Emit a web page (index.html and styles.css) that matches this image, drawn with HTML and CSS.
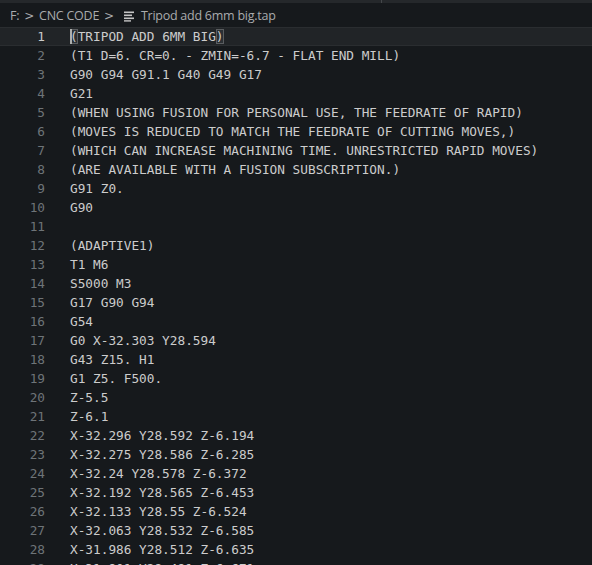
FILE: index.html
```html
<!DOCTYPE html>
<html>
<head>
<meta charset="utf-8">
<link rel="stylesheet" href="styles.css">
</head>
<body>
<div class="topstrip"><span class="tabsep"></span></div>
<div class="crumbs">
  <span>F:</span><span class="chev">&gt;</span><span>CNC CODE</span><span class="chev">&gt;</span>
  <svg class="fileicon" width="12" height="12" viewBox="0 0 12 12"><rect x="1" y="1.5" width="10" height="1.6" fill="#c5c5c5"/><rect x="1" y="4.5" width="8" height="1.6" fill="#c5c5c5"/><rect x="1" y="7.5" width="10" height="1.6" fill="#c5c5c5"/><rect x="1" y="10.2" width="7" height="1.4" fill="#c5c5c5"/></svg>
  <span>Tripod add 6mm big.tap</span>
</div>
<div class="editor">
  <div class="line current"><span class="ln">1</span><span class="code"><span class="cursor"></span><span class="bm">(</span>TRIPOD ADD 6MM BIG<span class="bm">)</span></span></div>
  <div class="line"><span class="ln">2</span><span class="code">(T1 D=6. CR=0. - ZMIN=-6.7 - FLAT END MILL)</span></div>
  <div class="line"><span class="ln">3</span><span class="code">G90 G94 G91.1 G40 G49 G17</span></div>
  <div class="line"><span class="ln">4</span><span class="code">G21</span></div>
  <div class="line"><span class="ln">5</span><span class="code">(WHEN USING FUSION FOR PERSONAL USE, THE FEEDRATE OF RAPID)</span></div>
  <div class="line"><span class="ln">6</span><span class="code">(MOVES IS REDUCED TO MATCH THE FEEDRATE OF CUTTING MOVES,)</span></div>
  <div class="line"><span class="ln">7</span><span class="code">(WHICH CAN INCREASE MACHINING TIME. UNRESTRICTED RAPID MOVES)</span></div>
  <div class="line"><span class="ln">8</span><span class="code">(ARE AVAILABLE WITH A FUSION SUBSCRIPTION.)</span></div>
  <div class="line"><span class="ln">9</span><span class="code">G91 Z0.</span></div>
  <div class="line"><span class="ln">10</span><span class="code">G90</span></div>
  <div class="line"><span class="ln">11</span><span class="code"></span></div>
  <div class="line"><span class="ln">12</span><span class="code">(ADAPTIVE1)</span></div>
  <div class="line"><span class="ln">13</span><span class="code">T1 M6</span></div>
  <div class="line"><span class="ln">14</span><span class="code">S5000 M3</span></div>
  <div class="line"><span class="ln">15</span><span class="code">G17 G90 G94</span></div>
  <div class="line"><span class="ln">16</span><span class="code">G54</span></div>
  <div class="line"><span class="ln">17</span><span class="code">G0 X-32.303 Y28.594</span></div>
  <div class="line"><span class="ln">18</span><span class="code">G43 Z15. H1</span></div>
  <div class="line"><span class="ln">19</span><span class="code">G1 Z5. F500.</span></div>
  <div class="line"><span class="ln">20</span><span class="code">Z-5.5</span></div>
  <div class="line"><span class="ln">21</span><span class="code">Z-6.1</span></div>
  <div class="line"><span class="ln">22</span><span class="code">X-32.296 Y28.592 Z-6.194</span></div>
  <div class="line"><span class="ln">23</span><span class="code">X-32.275 Y28.586 Z-6.285</span></div>
  <div class="line"><span class="ln">24</span><span class="code">X-32.24 Y28.578 Z-6.372</span></div>
  <div class="line"><span class="ln">25</span><span class="code">X-32.192 Y28.565 Z-6.453</span></div>
  <div class="line"><span class="ln">26</span><span class="code">X-32.133 Y28.55 Z-6.524</span></div>
  <div class="line"><span class="ln">27</span><span class="code">X-32.063 Y28.532 Z-6.585</span></div>
  <div class="line"><span class="ln">28</span><span class="code">X-31.986 Y28.512 Z-6.635</span></div>
  <div class="line"><span class="ln">29</span><span class="code">X-31.901 Y28.491 Z-6.671</span></div>
</div>
</body>
</html>
```
FILE: styles.css
```css
html, body {
  margin: 0;
  padding: 0;
  background: #16191c;
  width: 592px;
  height: 565px;
  overflow: hidden;
}
.topstrip {
  height: 3px;
  background: #25282b;
  position: relative;
}
.tabsep {
  position: absolute;
  left: 381px;
  top: 0;
  width: 1px;
  height: 3px;
  background: #44474a;
}
.crumbs {
  height: 24px;
  padding-top: 1px;
  box-sizing: border-box;
  display: flex;
  align-items: center;
  padding-left: 10px;
  font-family: "Open Sans", "Noto Sans", sans-serif;
  font-size: 12.5px;
  color: #a9abad;
  gap: 3px;
  letter-spacing: -0.25px;
}
.chev {
  font-family: "DejaVu Sans", sans-serif;
  font-size: 12px;
  margin: 0 2px;
}
.fileicon {
  margin: 0 3px 0 4px;
}
.editor {
  font-family: "DejaVu Sans Mono", monospace;
  font-size: 12.75px;
  color: #cccccc;
}
.line {
  height: 19px;
  line-height: 19px;
  display: flex;
  white-space: pre;
}
.line.current {
  background: #212427;
  box-shadow: inset 0 1px 0 #2a2d30, inset 0 -1px 0 #2a2d30;
}
.ln {
  width: 45px;
  text-align: right;
  color: #6e7478;
  flex: none;
}
.current .ln {
  color: #cccccc;
}
.code {
  margin-left: 25px;
  position: relative;
}
.bm {
  outline: 1px solid #5a5d60;
  outline-offset: -1px;
  background: #2c3034;
}
.cursor {
  position: absolute;
  left: 0;
  top: 2px;
  width: 2px;
  height: 15px;
  background: #aeafad;
}
```
